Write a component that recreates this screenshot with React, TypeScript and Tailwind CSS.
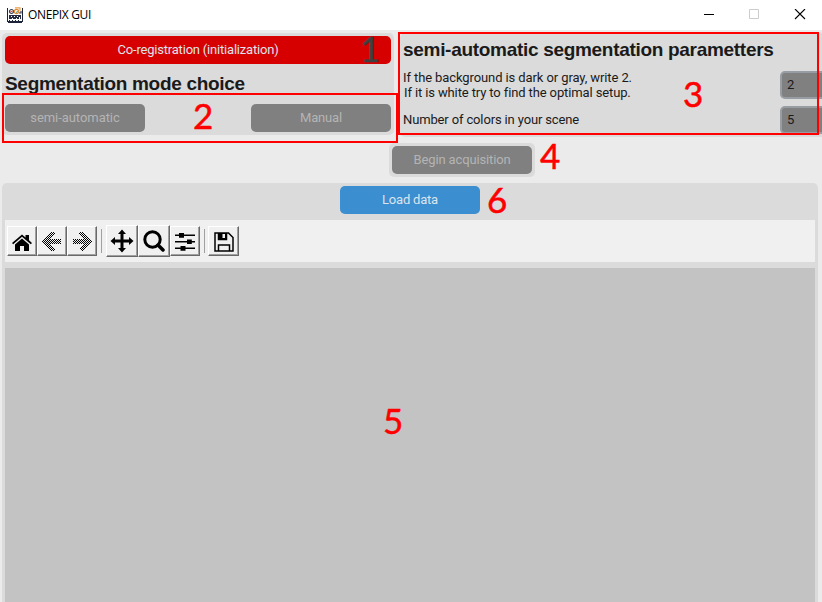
import type { ReactNode } from "react";

function AppIcon() {
  return (
    <svg width="16" height="16" viewBox="0 0 16 16" shapeRendering="crispEdges">
      <path d="M0 1h1v13h14V1h1v14h-1v1H1v-1H0z" fill="#1d2338" />
      <path d="M2 8h12v4H2z" fill="#262b42" />
      <path d="M4 9h1v1H4zM7 9h1v1H7zM10 9h1v1h-1zM12 10h1v2h-1zM5 11h1v1H5zM9 11h1v1H9z" fill="#fff" />
      <path d="M2 13h1v1H2zM5 13h1v1H5zM8 13h1v1H8zM11 13h1v1h-1z" fill="#1d2338" />
      <g shapeRendering="auto" fill="none" strokeWidth="1.2">
        <circle cx="4.5" cy="4.5" r="2" stroke="#353a55" />
        <circle cx="9.5" cy="4.5" r="2.2" stroke="#e08a2c" />
        <path d="M3.5 5l2-1" stroke="#d84a32" />
        <path d="M9 5.5l2-1" stroke="#4b9b9a" />
        <path d="M8 .8h5v3" stroke="#e8a04c" />
        <path d="M12 6h2V4" stroke="#353a55" />
      </g>
    </svg>
  );
}

function TitleBar() {
  return (
    <header className="flex h-[30px] shrink-0 items-center bg-white pl-[7px]">
      <AppIcon />
      <span className="ml-[5px] font-['Open_Sans',sans-serif] text-[12px] leading-[16px] tracking-[-0.35px] text-black">ONEPIX GUI</span>
      <svg className="ml-auto mr-[16px] shrink-0" width="102" height="12" viewBox="0 0 102 12" fill="none">
        <path d="M0 5.500h10" stroke="#000" />
        <path d="M45.500 0.500h9v9h-9z" stroke="#ccc" />
        <path d="M91 0l10 10M101 0L91 10" stroke="#000" strokeWidth="1.1" />
      </svg>
    </header>
  );
}

function Button({ className, children }: { className: string; children: ReactNode }) {
  return (
    <button className={`flex h-7 shrink-0 items-center justify-center rounded-[5px] pb-px text-[13px] leading-[16px] ${className}`}>
      {children}
    </button>
  );
}

function Entry({ value }: { value: string }) {
  return <div className="flex h-7 w-[140px] shrink-0 items-center rounded-[5px] border-2 border-[#979da2] bg-[#808080] pl-[5px] text-[13px] text-[#1a1a1a]">{value}</div>;
}

function Tool({ size, children }: { size: string; children: ReactNode }) {
  return (
    <button className={`flex shrink-0 items-center justify-center border border-b-[#696969] border-l-white border-r-[#696969] border-t-white bg-[#f0f0f0] shadow-[inset_-1px_-1px_0_#a0a0a0] ${size}`}>
      {children}
    </button>
  );
}

function Arrow({ flip = false }: { flip?: boolean }) {
  const id = flip ? "dither-forward" : "dither-back";
  return (
    <svg width="20" height="20" viewBox="0 0 20 20" className={flip ? "-scale-x-100" : ""} shapeRendering="crispEdges">
      <defs>
        <pattern id={id} width="2" height="2" patternUnits="userSpaceOnUse">
          <path d="M0 0h1v1H0zM1 1h1v1H1z" fill="#000" />
        </pattern>
      </defs>
      <path d="M0 10L9.500 0.500h1.500l2 2v1L8 8h11v4.500H8l5 4.500v1l-2 2H9.500z" fill={`url(#${id})`} />
    </svg>
  );
}

function Toolbar() {
  return (
    <div className="mt-[6px] flex h-[42px] shrink-0 items-center bg-[#f0f0f0] pl-[2px]">
      <Tool size="size-[30px]">
        <svg className="mt-[3px]" width="20" height="17" viewBox="0 0 20 17">
          <path d="M0 9L10 .4l3.500 3V1H17v5.300L20 9l-1.200 1.300L10 2.800 1.200 10.300z" />
          <path d="M3 10.500l7-5.900 7 5.900V17h-5v-5H8v5H3z" />
        </svg>
      </Tool>
      <Tool size="size-[30px]"><Arrow /></Tool>
      <Tool size="size-[30px]"><Arrow flip /></Tool>
      <span className="ml-1 mr-1 h-6 w-px shrink-0 bg-[#a0a0a0]" />
      <Tool size="size-8">
        <svg width="24" height="24" viewBox="0 0 24 24">
          <path d="M12 .5L16 5h-2.500v5.500H19V8l4.500 4-4.500 4v-2.500h-5.500V19H16l-4 4.500L8 19h2.500v-5.500H5V16L.5 12 5 8v2.500h5.500V5H8z" />
        </svg>
      </Tool>
      <Tool size="size-8">
        <svg width="22" height="22" viewBox="0 0 22 22" fill="none" stroke="#000">
          <circle cx="9.500" cy="9.500" r="7.700" strokeWidth="3" />
          <path d="M15 15l5 5" strokeWidth="3.500" strokeLinecap="round" />
        </svg>
      </Tool>
      <Tool size="size-[30px]">
        <svg width="20" height="20" viewBox="0 0 20 20">
          <path d="M0 3.500h20V5H0zM0 10h20v1.500H0zM0 16.500h20V18H0zM4 2h5v4.700H4zM12 8.500h4.800v4.600H12zM5.500 15h5v4.700h-5z" />
        </svg>
      </Tool>
      <span className="ml-1 mr-[3px] h-6 w-px shrink-0 bg-[#a0a0a0]" />
      <Tool size="h-[30px] w-[31px]">
        <svg className="mt-px" width="20" height="20" viewBox="0 0 20 20" fill="none" stroke="#000" strokeWidth="1.500">
          <path d="M1 1h13.500L19 5.500V19H1zM4.500 19v-6h11v6M4.500 1v6.500h8V1" />
          <path d="M4.500 1h8v6.500h-8zM8.500 2v4h2.500V2z" fill="#000" fillRule="evenodd" stroke="none" />
        </svg>
      </Tool>
    </div>
  );
}

function Mark({ n, className }: { n: string; className: string }) {
  return <span className={`absolute font-['Lato',sans-serif] text-[35px] leading-[36px] [-webkit-text-stroke:0.5px_currentColor] ${className}`}>{n}</span>;
}

export default function App() {
  return (
    <div className="relative flex h-[602px] w-[822px] flex-col overflow-hidden bg-[#ebebeb] font-['Roboto',sans-serif] text-[13px] text-[#1a1a1a]">
      <TitleBar />

      <div className="flex h-[107px] shrink-0 items-start pl-[2px] pt-[3px]">
        <section className="flex h-[102px] w-[392px] shrink-0 flex-col rounded-[5px] bg-[#dbdbdb] p-[3px]">
          <Button className="bg-[#d60000] tracking-[-0.2px] text-[#dce4ee]">Co-registration (initialization)</Button>
          <h2 className="mt-[8px] h-6 whitespace-nowrap font-['Liberation_Sans',sans-serif] text-[19px] font-bold leading-6 tracking-[-0.3px]">Segmentation mode choice</h2>
          <div className="mt-[8px] flex justify-between">
            <Button className="w-[140px] bg-[#808080] tracking-[-0.06px] text-[#b4b4b4]">semi-automatic</Button>
            <Button className="w-[140px] bg-[#808080] tracking-[-0.15px] text-[#b4b4b4]">Manual</Button>
          </div>
        </section>

        <section className="ml-[6px] flex h-[104px] w-[530px] shrink-0 flex-col rounded-[5px] bg-[#dbdbdb] pl-[3px] pt-[3px]">
          <h2 className="mt-px h-[26px] whitespace-nowrap font-['Liberation_Sans',sans-serif] text-[19px] font-bold leading-[26px] tracking-[-0.3px]">semi-automatic segmentation parametters</h2>
          <div className="mt-[8px] flex h-7 items-center">
            <p className="w-[377px] shrink-0 leading-[15px] tracking-[-0.1px]">
              If the background is dark or gray, write 2.
              <br />
              <span className="pl-px tracking-[-0.12px]">If it is white try to find the optimal setup.</span>
            </p>
            <Entry value="2" />
          </div>
          <div className="mt-[7px] flex h-7 items-center">
            <p className="w-[377px] shrink-0 pb-px tracking-[-0.14px]">Number of colors in your scene</p>
            <Entry value="5" />
          </div>
        </section>
      </div>

      <div className="ml-[389px] mt-[6px] flex h-[34px] w-[146px] shrink-0 rounded-[5px] bg-[#dbdbdb] p-[3px]">
        <Button className="w-[140px] bg-[#808080] tracking-[-0.14px] text-[#b4b4b4]">Begin acquisition</Button>
      </div>

      <main className="ml-[2px] mt-[6px] flex w-[816px] flex-1 flex-col rounded-t-[5px] bg-[#dbdbdb] px-[3px] pt-[3px]">
        <Button className="w-[140px] self-center bg-[#3b8ed0] tracking-[-0.2px] text-[#dce4ee]">Load data</Button>
        <Toolbar />
        <div className="mt-[6px] flex-1 bg-[#c3c3c3]" />
      </main>

      <div className="absolute left-[2px] top-[93px] h-[50px] w-[396px] border-2 border-[#f00]" />
      <div className="absolute left-[398px] top-[32px] h-[103px] w-[421px] border-2 border-[#f00]" />
      <Mark n="1" className="left-[360px] top-[30px] text-[#404040]" />
      <Mark n="2" className="left-[193px] top-[97px] text-[#f00]" />
      <Mark n="3" className="left-[683px] top-[75px] text-[#f00]" />
      <Mark n="4" className="left-[540px] top-[137px] text-[#f00]" />
      <Mark n="5" className="left-[383px] top-[402px] text-[#f00]" />
      <Mark n="6" className="left-[487px] top-[181px] text-[#f00]" />
    </div>
  );
}
